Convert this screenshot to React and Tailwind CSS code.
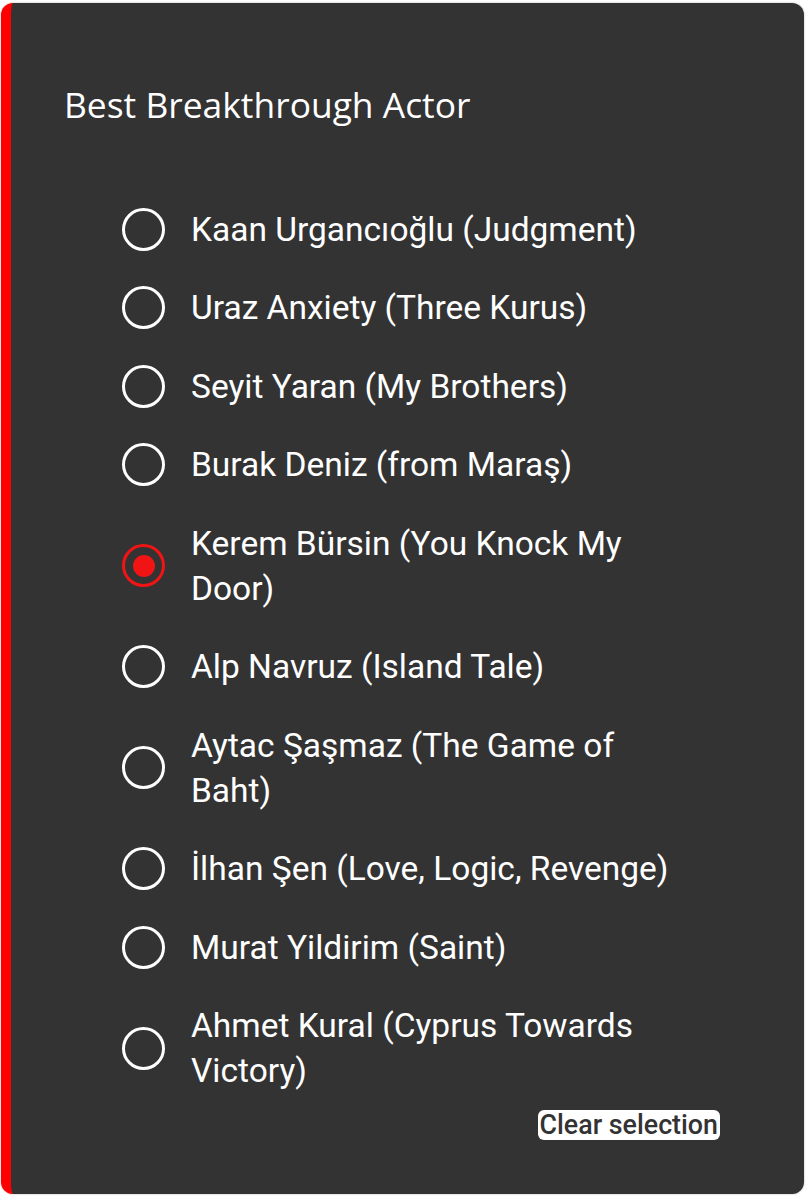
import { useState } from "react";

const nominees = [
  "Kaan Urgancıoğlu (Judgment)",
  "Uraz Anxiety (Three Kurus)",
  "Seyit Yaran (My Brothers)",
  "Burak Deniz (from Maraş)",
  "Kerem Bürsin (You Knock My Door)",
  "Alp Navruz (Island Tale)",
  "Aytac Şaşmaz (The Game of Baht)",
  "İlhan Şen (Love, Logic, Revenge)",
  "Murat Yildirim (Saint)",
  "Ahmet Kural (Cyprus Towards Victory)",
];

function Radio({ checked }) {
  return (
    <span
      className={`flex h-[43px] w-[43px] shrink-0 items-center justify-center rounded-full border-[3.5px] ${
        checked ? "border-[#f01414]" : "border-white"
      }`}
    >
      {checked && <span className="h-[22px] w-[22px] rounded-full bg-[#f01414]" />}
    </span>
  );
}

export default function App() {
  const [selected, setSelected] = useState(4);

  return (
    <div className="min-h-[1200px] bg-white pl-[1px] pt-[3px]">
      <div className="h-[1191px] w-[803px] rounded-[12px] border-l-[10px] border-l-[#ff0000] bg-[#333333] pl-[53px] pt-[77px] shadow-[0_0_2px_rgba(0,0,0,0.35)]">
        <h2 className="font-['Open_Sans',sans-serif] text-[35.4px] font-normal leading-[48px] text-white">
          Best Breakthrough Actor
        </h2>

        {/* options */}
        <div className="mt-[62px] pl-[58px] font-['Roboto',sans-serif] text-[33.5px] leading-[45px] text-white">
          {nominees.map((name, i) => (
            <label
              key={name}
              onClick={() => setSelected(i)}
              className="flex cursor-pointer items-center gap-[26px] py-[16.75px]"
            >
              <Radio checked={selected === i} />
              <span className="w-[495px]">{name}</span>
            </label>
          ))}
        </div>

        <div className="flex justify-end pr-[84px]">
          <button
            onClick={() => setSelected(null)}
            className="rounded-[6px] bg-white px-[2px] font-['Roboto',sans-serif] text-[26.8px] font-medium leading-[30px] text-[#333333]"
          >
            Clear selection
          </button>
        </div>
      </div>
    </div>
  );
}
